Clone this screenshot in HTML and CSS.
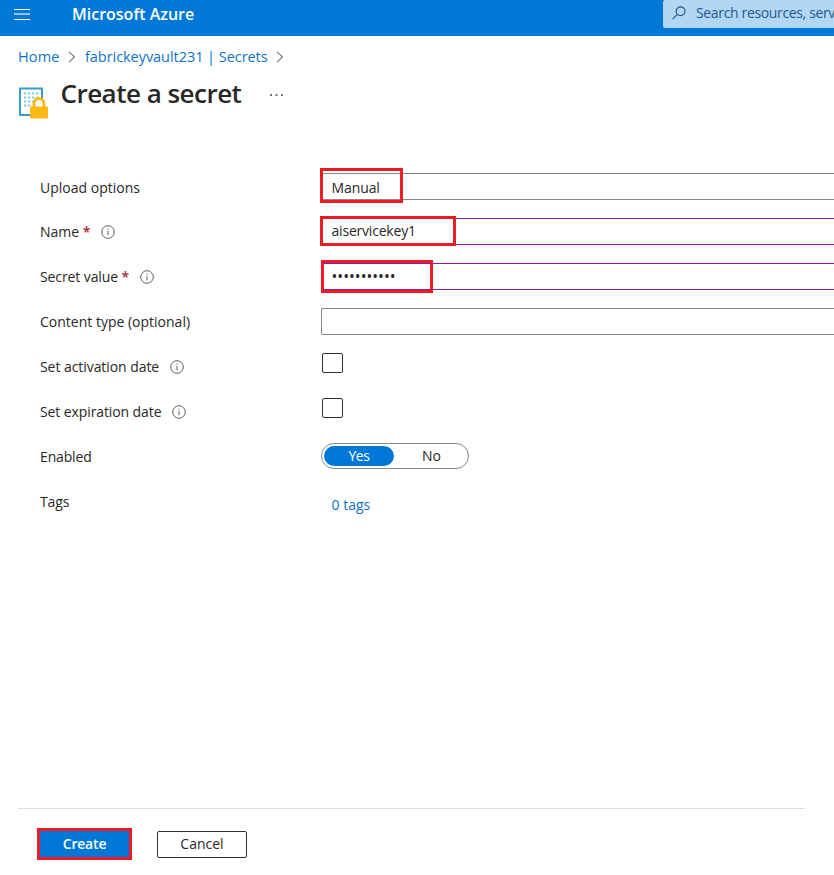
FILE: index.html
```html
<!DOCTYPE html>
<html lang="en">
<head>
<meta charset="utf-8">
<title>Create a secret - Microsoft Azure</title>
<link rel="stylesheet" href="styles.css">
</head>
<body>
<svg width="0" height="0" class="defs">
  <symbol id="info" viewBox="0 0 14 14"><circle cx="7" cy="7" r="6.3" fill="none" stroke="#605e5c" stroke-width="1"/><path d="M7 6v4.3M7 3.6v1.2" stroke="#605e5c" stroke-width="1"/></symbol>
  <symbol id="chevron" viewBox="0 0 8 12"><path d="M1 .8 6.5 6 1 11.2" fill="none" stroke="#767676" stroke-width="1.1"/></symbol>
</svg>
<header class="topbar">
  <svg class="menu" width="16" height="11"><path d="M0 .5h16M0 10.5h16" stroke="#fff"/><path d="M0 5h16" stroke="#8cc3f0" stroke-width="2"/></svg>
  <span class="brand">Microsoft Azure</span>
  <div class="search">
    <svg width="14" height="14" viewBox="0 0 14 14" fill="none" stroke="#1b5a92" stroke-width="1.2"><circle cx="8.6" cy="5.2" r="4.4"/><path d="M5.4 8.4.6 13.2"/></svg>
    <span>Search resources, serv</span>
  </div>
</header>
<nav class="crumbs">
  <a class="home">Home</a><svg width="8" height="12"><use href="#chevron"/></svg>
  <a class="vault">fabrickeyvault231 | Secrets</a><svg width="8" height="12"><use href="#chevron"/></svg>
</nav>
<div class="heading">
  <svg class="secret-icon" width="30" height="33" viewBox="0 0 30 33">
    <rect x="1" y="1.5" width="22" height="26.5" fill="#fff" stroke="#3c9ccc" stroke-width="2"/>
    <path d="M5 6.5h15M5 10.5h15M5 14.5h15M5 18.5h8" stroke="#8cc6e4" stroke-width="2.2" stroke-dasharray="2.4 1.6"/>
    <path d="M15 20v-3.5a5 5 0 0 1 10 0V20" fill="#fff" stroke="#fdb913" stroke-width="2.8"/>
    <rect x="11" y="19.5" width="18" height="12" rx="1.3" fill="#fdb913"/>
  </svg>
  <h1>Create a secret</h1>
  <svg class="more" width="13" height="2"><path d="M0 1h2M5.5 1h2M11 1h2" stroke="#444" stroke-width="1.5"/></svg>
</div>
<main class="form">
  <div class="row first"><label>Upload options</label><div class="control"><div class="field"><span>Manual</span></div><i class="mark mark-manual"></i></div></div>
  <div class="row"><label>Name <b>*</b></label><svg class="info"><use href="#info"/></svg><div class="control"><div class="field edited"><span class="v-name">aiservicekey1</span></div><i class="mark mark-name"></i></div></div>
  <div class="row"><label class="l-value">Secret value <b>*</b></label><svg class="info"><use href="#info"/></svg><div class="control"><div class="field edited"><span class="v-dots">•••••••••••</span></div><i class="mark mark-value"></i></div></div>
  <div class="row"><label>Content type (optional)</label><div class="control"><div class="field"></div></div></div>
  <div class="row"><label class="l-act">Set activation date</label><svg class="info"><use href="#info"/></svg><div class="control"><div class="check"></div></div></div>
  <div class="row"><label class="l-exp">Set expiration date</label><svg class="info"><use href="#info"/></svg><div class="control"><div class="check"></div></div></div>
  <div class="row"><label class="l-enabled">Enabled</label><div class="control"><div class="toggle"><span class="on">Yes</span><span class="off">No</span></div></div></div>
  <div class="row"><label class="l-tags">Tags</label><div class="control"><a class="tags">0 tags</a></div></div>
</main>
<footer class="actions">
  <button class="primary">Create</button>
  <button class="secondary">Cancel</button>
</footer>
</body>
</html>
```
FILE: styles.css
```css
* { box-sizing: border-box; }
body { margin: 0; width: 834px; height: 875px; overflow: hidden; display: flex; flex-direction: column; background: #fff; color: #292827; font: 14px/20px "Open Sans", "Noto Sans", sans-serif; white-space: nowrap; }
svg { display: block; flex: none; }
.defs { position: absolute; }
.topbar { height: 36px; flex: none; display: flex; align-items: flex-start; background: #0078d7; overflow: hidden; }
.menu { margin: 9px 0 0 14px; }
.brand { width: 591px; flex: none; margin: 4px 0 0 42px; color: #fff; font-size: 16px; font-weight: 600; }
.search { display: flex; flex: 1; height: 28px; padding: 6px 0 0 9px; gap: 10px; background: #b3d6f3; border-radius: 2px 0 0 2px; color: #1b5a92; overflow: hidden; }
.search span { margin-top: -3px; letter-spacing: -.35px; }
.crumbs { height: 42px; flex: none; display: flex; align-items: center; padding-left: 18px; color: #0f73c8; font-size: 14.5px; }
.crumbs svg { margin: 0 9px 0 8px; }
.home { width: 42px; letter-spacing: .15px; }
.vault { width: 183px; letter-spacing: -.05px; }
.heading { height: 86px; flex: none; display: flex; align-items: flex-start; padding-left: 19px; }
.secret-icon { margin-top: 9px; }
h1 { width: 181px; margin: -5px 28px 0 11.5px; font-size: 26px; line-height: 40px; font-weight: 600; letter-spacing: -.52px; }
.more { margin-top: 16px; }
.form { flex: 1; padding-left: 40px; }
.row { display: flex; height: 45px; position: relative; }
label { padding-top: 13px; }
.first label { padding-top: 14px; }
label b { color: #a4262c; font-weight: 600; }
.l-value { letter-spacing: -.1px; }
.l-act { letter-spacing: -.06px; }
.l-exp { letter-spacing: -.1px; }
.l-enabled, .l-tags { letter-spacing: -.15px; }
.info { width: 14px; height: 14px; margin: 16px 0 0 10.5px; }
.control { position: absolute; left: 281px; right: 0; top: 9px; }
.field { height: 27px; border: 1px solid #8a8886; border-right: 0; border-radius: 2px 0 0 2px; padding: 4px 0 0 9.5px; letter-spacing: -.1px; }
.edited { border-color: #881fa3; padding-top: 2px; }
.v-name { letter-spacing: -.2px; }
.v-dots { font-size: 15.5px; letter-spacing: 0; }
.mark { position: absolute; border: 3px solid #ed1c24; }
.mark-manual { left: -1px; top: -5px; width: 83px; height: 35px; }
.mark-name { left: -1px; top: -2px; width: 136px; height: 30px; }
.mark-value { left: 0; top: -3px; width: 112px; height: 33px; }
.check { width: 21px; height: 20px; margin-left: 1px; border: 1px solid #323130; border-radius: 2px; }
.toggle { display: flex; width: 148px; height: 26px; padding: 2px; border: 1px solid #8a8886; border-radius: 13px; line-height: 19px; text-align: center; }
.on { width: 70px; flex: none; height: 20px; border-radius: 10px; background: #0078d7; color: #fff; letter-spacing: -.4px; }
.off { width: 75px; flex: none; }
.tags { display: block; margin: 7px 0 0 10.5px; color: #0f73c8; }
.actions { height: 67px; flex: none; display: flex; gap: 25px; margin: 0 29px 0 18px; border-top: 1px solid #dedede; padding: 19px 0 0 19px; }
button { font: inherit; padding: 0; color: inherit; }
.primary { width: 95px; height: 32px; border: 3px solid #ed1c24; background: #0078d7; color: #fff; font-weight: 600; letter-spacing: -.2px; }
.secondary { width: 90px; height: 27px; margin-top: 3px; padding-bottom: 2px; border: 1px solid #323130; border-radius: 2px; background: #fff; }
```
